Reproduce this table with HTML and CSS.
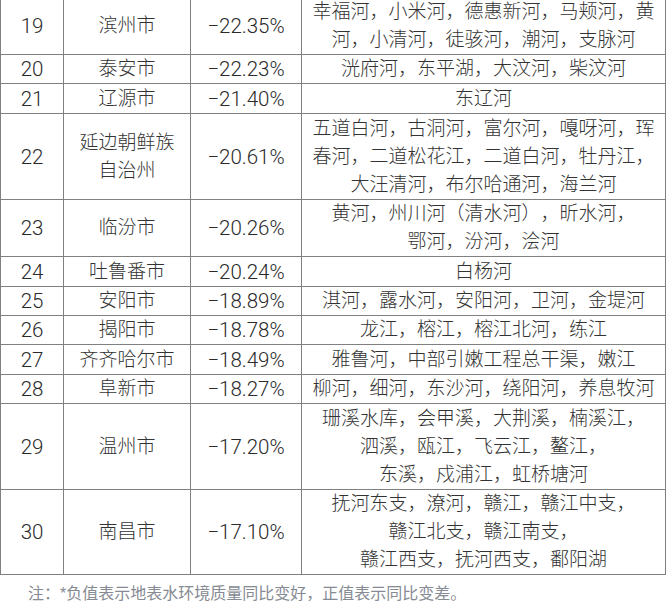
FILE: index.html
```html
<!DOCTYPE html>
<html lang="zh-CN">
<head>
<meta charset="utf-8">
<title>城市地表水环境质量变化</title>
<link rel="stylesheet" href="styles.css">
</head>
<body>
<div class="page">
<table class="data">
<colgroup>
<col class="c-rank"><col class="c-city"><col class="c-pct"><col class="c-river">
</colgroup>
<tbody>
<tr class="l2"><td class="num">19</td><td>滨州市</td><td class="num">−22.35%</td><td>幸福河，小米河，德惠新河，马颊河，黄<br>河，小清河，徒骇河，潮河，支脉河</td></tr>
<tr><td class="num">20</td><td>泰安市</td><td class="num">−22.23%</td><td>洸府河，东平湖，大汶河，柴汶河</td></tr>
<tr class="t1"><td class="num">21</td><td>辽源市</td><td class="num">−21.40%</td><td>东辽河</td></tr>
<tr class="l3"><td class="num">22</td><td>延边朝鲜族<br>自治州</td><td class="num">−20.61%</td><td>五道白河，古洞河，富尔河，嘎呀河，珲<br>春河，二道松花江，二道白河，牡丹江，<br>大汪清河，布尔哈通河，海兰河</td></tr>
<tr class="l2"><td class="num">23</td><td>临汾市</td><td class="num">−20.26%</td><td>黄河，州川河（清水河），昕水河，<br>鄂河，汾河，浍河</td></tr>
<tr class="t1"><td class="num">24</td><td>吐鲁番市</td><td class="num">−20.24%</td><td>白杨河</td></tr>
<tr><td class="num">25</td><td>安阳市</td><td class="num">−18.89%</td><td>淇河，露水河，安阳河，卫河，金堤河</td></tr>
<tr><td class="num">26</td><td>揭阳市</td><td class="num">−18.78%</td><td>龙江，榕江，榕江北河，练江</td></tr>
<tr class="t1"><td class="num">27</td><td>齐齐哈尔市</td><td class="num">−18.49%</td><td>雅鲁河，中部引嫩工程总干渠，嫩江</td></tr>
<tr><td class="num">28</td><td>阜新市</td><td class="num">−18.27%</td><td>柳河，细河，东沙河，绕阳河，养息牧河</td></tr>
<tr class="l3"><td class="num">29</td><td>温州市</td><td class="num">−17.20%</td><td>珊溪水库，会甲溪，大荆溪，楠溪江，<br>泗溪，瓯江，飞云江，鳌江，<br>东溪，戍浦江，虹桥塘河</td></tr>
<tr class="l3b"><td class="num">30</td><td>南昌市</td><td class="num">−17.10%</td><td>抚河东支，潦河，赣江，赣江中支，<br>赣江北支，赣江南支，<br>赣江西支，抚河西支，鄱阳湖</td></tr>
</tbody>
</table>
<p class="note">注：*负值表示地表水环境质量同比变好，正值表示同比变差。</p>
</div>
</body>
</html>
```
FILE: styles.css
```css
html, body {
  margin: 0;
  padding: 0;
  background: #ffffff;
}
body {
  font-family: "Liberation Sans", "Noto Sans CJK SC", sans-serif;
  color: #333333;
  overflow: hidden;
  text-spacing-trim: space-all;
}
.page {
  width: 667px;
  margin-top: -3px;
}
.data {
  border-collapse: collapse;
  table-layout: fixed;
  width: 665px;
}
.c-rank { width: 63px; }
.c-city { width: 127px; }
.c-pct { width: 111px; }
.c-river { width: 364px; }
.data td {
  border: 1px solid #808080;
  padding: 0;
  height: 28px;
  line-height: 28px;
  font-size: 19px;
  font-weight: 300;
  text-align: center;
  vertical-align: middle;
  white-space: nowrap;
}
.data td.num {
  font-family: "Roboto", "Liberation Sans", sans-serif;
  font-size: 20.5px;
  font-weight: 300;
  color: #2a2a2a;
}
.data tr.t1 td { height: 29px; }
.data tr.l2 td { height: 56px; }
.data tr.l3 td { height: 85px; }
.data tr.l3b td { height: 84px; }
.note {
  margin: 7px 0 0 28px;
  font-size: 16px;
  line-height: 24px;
  color: #868a92;
}
```
